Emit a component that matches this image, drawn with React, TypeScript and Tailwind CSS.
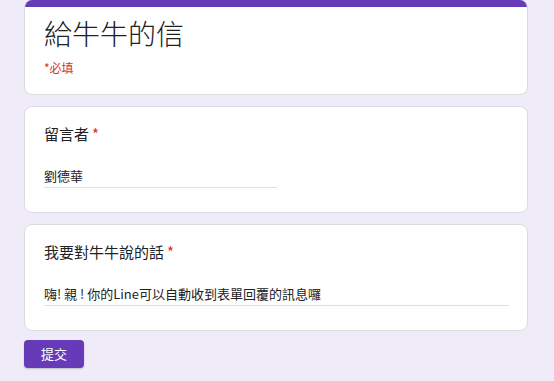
import React from "react";

const font = { fontFamily: '"Noto Sans CJK TC", "Noto Sans", sans-serif' };

function Question({ label, value, lineWidth }: { label: string; value: string; lineWidth: string }) {
  return (
    <div className="bg-white border border-[#dadce0] rounded-[8px] pl-[19px] pr-[18px] pt-[17px] h-[107px]">
      <div className="text-[15px] leading-[20px] text-[#202124]">
        {label}
        <span className="text-[#d93025] ml-[3px]">*</span>
      </div>
      <div className={`mt-[23px] border-b border-[#e0e0e0] ${lineWidth}`}>
        <div className="text-[13px] leading-[17px] text-[#202124] pb-[3px]">{value}</div>
      </div>
    </div>
  );
}

export default function App() {
  return (
    <div className="w-[554px] h-[381px] bg-[#f0ebf8] overflow-hidden" style={font}>
      <div className="pl-[24px] pr-[26px] flex flex-col gap-[11px]">
        <div className="bg-white border border-[#dadce0] border-t-0 rounded-[8px] overflow-hidden h-[95px]">
          <div className="h-[7px] bg-[#673ab7]" />
          <div className="pl-[19px] pt-[8px]">
            <div className="text-[28px] leading-[36px] text-[#202124] font-light">給牛牛的信</div>
            <div className="mt-[8px] text-[12px] leading-[18px] text-[#d93025]">*必填</div>
          </div>
        </div>
        <Question label="留言者" value="劉德華" lineWidth="w-[233px]" />
        <Question label="我要對牛牛說的話" value="嗨! 親 ! 你的Line可以自動收到表單回覆的訊息囉" lineWidth="w-full" />
        <div className="-mt-[2px]">
          <button className="w-[60px] h-[28px] rounded-[4px] bg-[#673ab7] text-white text-[13px] leading-[28px] shadow-[0_1px_2px_rgba(0,0,0,0.2)]">
            提交
          </button>
        </div>
      </div>
    </div>
  );
}
